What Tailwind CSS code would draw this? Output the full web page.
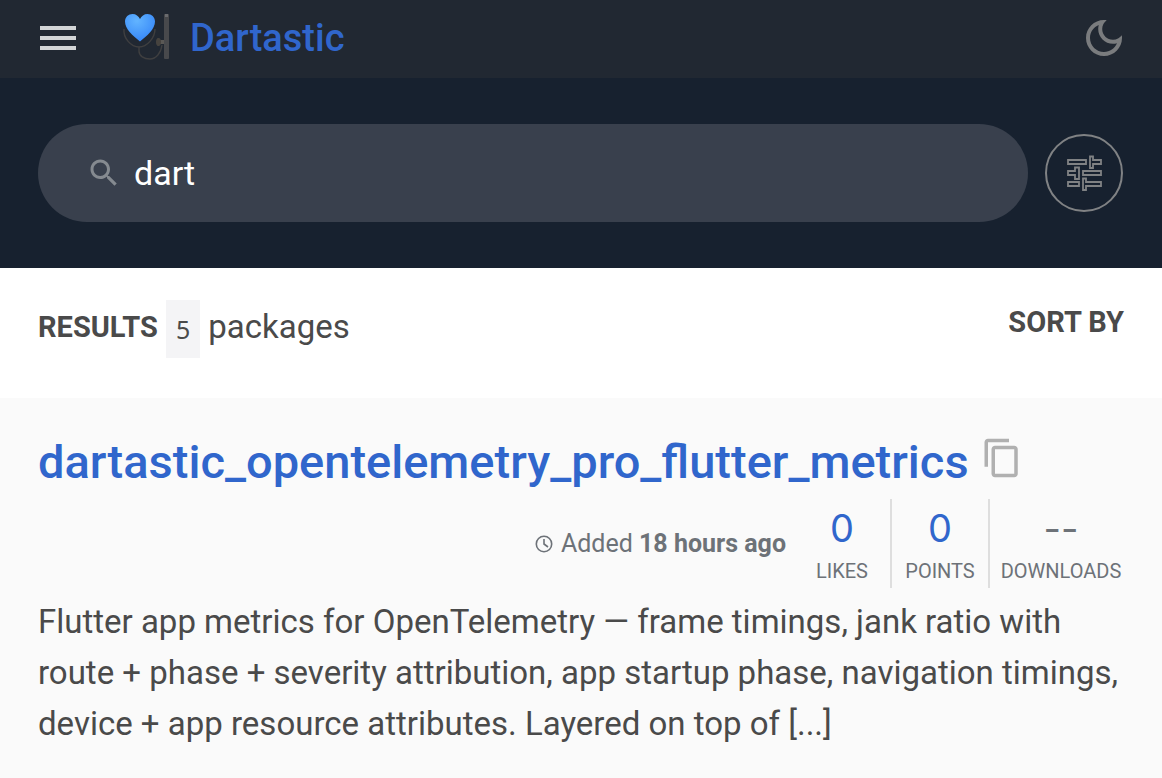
<!DOCTYPE html>
<html lang="en">
<head>
    <meta charset="UTF-8">
    <meta name="viewport" content="width=device-width, initial-scale=1.0">
    <title>Search results for dart</title>
    <script src="https://cdn.jsdelivr.net/npm/@tailwindcss/browser@4"></script>
</head>
<body class="min-h-screen bg-[#fafafa] font-['Roboto',sans-serif] text-[#4a4a4a]">
    <header class="flex h-[78px] items-center bg-[#212832] px-[34px] pb-[3px]">
        <button type="button" aria-label="Menu" class="text-[#d3d5d7]">
            <svg class="size-12" viewBox="0 0 24 24" fill="currentColor"><path d="M3 18h18v-2H3v2zm0-5h18v-2H3v2zm0-7v2h18V6H3z"/></svg>
        </button>
        <a href="#" class="ml-9 flex items-center gap-4 text-[38px] leading-12 font-medium text-[#3066cc]">
            <!-- heart wearing a stethoscope, listening to a phone -->
            <svg class="h-14 w-14" viewBox="-1 4 56 56" fill="none">
                <defs>
                    <radialGradient id="heart" cx="0.4" cy="0.25" r="0.8">
                        <stop offset="0" stop-color="#62b4ff"/>
                        <stop offset="1" stop-color="#3384f8"/>
                    </radialGradient>
                </defs>
                <path d="M5 23c-1 9 7 18 15 18s16-9 16-18M20 41v4c0 5 5 8 11 8s11-6 12-14" stroke="#3f3f40" stroke-width="1.4"/>
                <path d="M21 35.500C14 30 6 23 6 15.500C6 11 9.500 8 13.500 8c3.500 0 6 2 7.500 5c1.500-3 4-5 7.500-5c4 0 7.500 3 7.500 7.500C36 23 28 30 21 35.500z" fill="url(#heart)"/>
                <path d="M38 33l2-1v8l-2-1zM41 34h5v4h-5z" fill="#5a5855"/>
                <ellipse cx="39.500" cy="36" rx="2.500" ry="4" fill="#46433f"/>
                <rect x="45" y="8" width="5" height="45" rx="1" fill="#48494c"/>
                <rect x="46" y="8" width="3" height="3" fill="#6a6b6e"/>
            </svg>
            <span>Dartastic</span>
        </a>
        <button type="button" aria-label="Dark mode" class="ml-auto text-[#7a7c7e]">
            <svg class="size-12" viewBox="0 0 24 24" fill="currentColor"><path d="M9.370 5.510C9.190 6.150 9.100 6.820 9.100 7.500c0 4.080 3.320 7.400 7.400 7.400c.68 0 1.350-.09 1.990-.27C17.450 17.190 14.930 19 12 19c-3.860 0-7-3.140-7-7C5 9.070 6.810 6.550 9.370 5.510zM12 3c-4.970 0-9 4.030-9 9s4.030 9 9 9s9-4.030 9-9c0-.46-.04-.92-.1-1.360c-.98 1.370-2.580 2.260-4.400 2.260c-2.980 0-5.400-2.420-5.400-5.400c0-1.810.89-3.420 2.260-4.400C12.920 3.040 12.460 3 12 3z"/></svg>
        </button>
    </header>

    <form class="flex h-[190px] items-center gap-[17px] bg-[#17212f] pr-[39px] pl-[38px]">
        <div class="flex h-[98px] flex-1 items-center gap-3 rounded-full bg-[#39404d] pr-8 pl-12">
            <svg class="size-9 shrink-0 text-[#858a90]" viewBox="0 0 24 24" fill="currentColor"><path d="M15.500 14h-.79l-.28-.27C15.410 12.590 16 11.110 16 9.500 16 5.910 13.090 3 9.500 3S3 5.910 3 9.500 5.910 16 9.500 16c1.610 0 3.090-.59 4.230-1.570l.27.28v.79l5 4.990L20.490 19l-4.990-5zm-6 0C7.010 14 5 11.990 5 9.500S7.010 5 9.500 5 14 7.010 14 9.500 11.990 14 9.500 14z"/></svg>
            <input type="text" name="q" value="dart" aria-label="Search packages" class="h-14 min-w-0 flex-1 bg-transparent text-[34px] text-white outline-none">
        </div>
        <button type="button" aria-label="Filters" class="flex size-[78px] items-center justify-center rounded-full border-2 border-[#808284] text-[#808284]">
            <svg class="size-10" viewBox="0 0 40 40" fill="none" stroke="currentColor" stroke-width="1.800">
                <path d="M4 7h18v4H4zM26 3.500h3V7h8v4h-8v4h-3z"/>
                <path d="M4 18h7v-3.500h4V26h-4v-4H4zM19 18h18v4H19z"/>
                <path d="M4 29h11v4H4zM19 25.500h3V29h15v4H22v4h-3z"/>
            </svg>
        </button>
    </form>

    <main>
        <div class="flex h-[130px] items-start justify-between bg-white px-[38px] pt-8">
            <p class="flex items-start gap-2 text-[33px] leading-[54px]">
                <strong class="text-[29px] leading-[54px]">RESULTS</strong>
                <span class="bg-[#f4f4f6] px-[10px] font-['Noto_Sans',sans-serif] text-[25px] leading-[58px]">5</span>
                <span>packages</span>
            </p>
            <button type="button" class="text-[29px] leading-[44px] font-bold">SORT BY</button>
        </div>

        <article class="px-[38px] pt-8">
            <h3 class="flex items-center gap-3 text-[47px] leading-[64px] font-medium text-[#3066cc]">
                <a href="#">dartastic_opentelemetry_pro_flutter_metrics</a>
                <button type="button" aria-label="Copy package name" class="pb-2 text-[#b0b0b0]">
                    <svg class="size-[42px]" viewBox="0 0 24 24" fill="currentColor"><path d="M16 1H4c-1.100 0-2 .9-2 2v14h2V3h12V1zm3 4H8c-1.100 0-2 .9-2 2v14c0 1.100.9 2 2 2h11c1.100 0 2-.9 2-2V7c0-1.100-.9-2-2-2zm0 16H8V7h11v14z"/></svg>
                </button>
            </h3>
            <div class="mt-[5px] flex items-center justify-end text-[#6d7278]">
                <p class="mr-2 flex items-center gap-2 text-[25px]">
                    <svg class="size-[18px]" viewBox="0 0 18 18" fill="none" stroke="currentColor" stroke-width="1.600"><circle cx="9" cy="9" r="7.700"/><path d="M9 4v5l4 3"/></svg>
                    <span>Added <strong>18 hours ago</strong></span>
                </p>
                <a href="#" class="flex h-[89px] w-[98px] flex-col items-center border-r-2 border-[#dedede]">
                    <span class="font-['Inter',sans-serif] text-[38px] leading-[58px] text-[#3066cc]">0</span>
                    <span class="text-xl">LIKES</span>
                </a>
                <a href="#" class="flex h-[89px] w-[98px] flex-col items-center border-r-2 border-[#dedede]">
                    <span class="font-['Inter',sans-serif] text-[38px] leading-[58px] text-[#3066cc]">0</span>
                    <span class="text-xl">POINTS</span>
                </a>
                <a href="#" class="flex h-[89px] flex-col items-center pl-2">
                    <span class="font-['Inter',sans-serif] text-[38px] leading-[58px]">--</span>
                    <span class="w-[126px] text-center text-xl">DOWNLOADS</span>
                </a>
            </div>
            <p class="mt-2 text-[33px] leading-[51px]">Flutter app metrics for OpenTelemetry — frame timings, jank ratio with route + phase + severity attribution, app startup phase, navigation timings, device + app resource attributes. Layered on top of [...]</p>
        </article>
    </main>
</body>
</html>
